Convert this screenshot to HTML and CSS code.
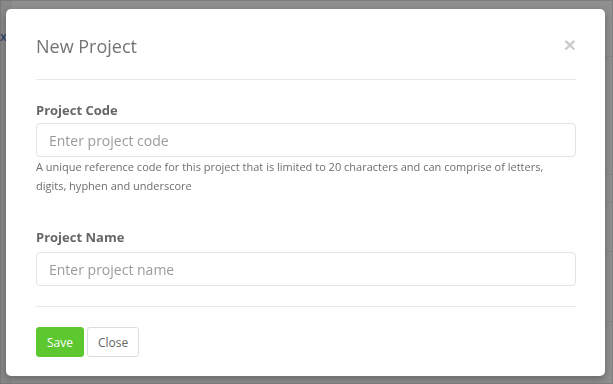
FILE: index.html
```
<!DOCTYPE html>
<html>
<head>
    <meta charset="UTF-8">
    <title>Projects</title>

    <link rel="stylesheet" href="styles.css">

</head>

<body>

<div class="page">
    <div class="page-row page-row-top"><a class="page-link">x</a></div>
    <div class="page-row page-row-1"></div>
    <div class="page-row page-row-2"></div>
    <div class="page-row page-row-3"></div>
    <div class="page-row page-row-4"></div>
    <div class="page-row page-row-5"></div>
</div>

<div class="backdrop">

    <div class="modal">

        <div class="modal-header">
            <h4 class="modal-title">New Project</h4>
            <button type="button" class="modal-close">&times;</button>
        </div>

        <form class="modal-body">
            <div class="form-group">
                <label for="projectCode">Project Code</label>
                <input id="projectCode" type="text" placeholder="Enter project code">
                <p class="help-block">A unique reference code for this project that is limited to 20 characters and can comprise of letters, digits, hyphen and underscore</p>
            </div>

            <div class="form-group form-group-last">
                <label for="projectName">Project Name</label>
                <input id="projectName" type="text" placeholder="Enter project name">
            </div>
        </form>

        <div class="modal-footer">
            <button type="button" class="btn btn-save">Save</button>
            <button type="button" class="btn btn-close">Close</button>
        </div>

    </div>

</div>

</body>
</html>
```

FILE: styles.css
```
html, body {
    margin: 0;
    height: 100%;
}

body {
    font-family: "Open Sans", "Liberation Sans", sans-serif;
    background: #ffffff;
    overflow: hidden;
}

/* page behind the dialog */

.page {
    border-left: 12px solid #f3f3f3;
}

.page-row {
    border-bottom: 1px solid #f0f0f0;
}

.page-row-top {
    height: 56px;
    position: relative;
}

.page-link {
    position: absolute;
    left: -12px;
    top: 27px;
    color: #2a5db0;
    font-size: 13px;
}

.page-row-1 {
    height: 117px;
}

.page-row-2 {
    height: 27px;
}

.page-row-3 {
    height: 48px;
}

.page-row-4 {
    height: 69px;
}

.page-row-5 {
    height: 80px;
}

/* dialog */

.backdrop {
    position: fixed;
    top: 0;
    left: 0;
    right: 0;
    bottom: 0;
    background: rgba(0, 0, 0, 0.44);
    border: 1px solid rgba(0, 0, 0, 0.12);
}

.modal {
    margin: 8px 0 0 5px;
    width: 599px;
    height: 367px;
    box-sizing: border-box;
    padding: 0 29px 0 30px;
    background: #ffffff;
    border-radius: 5px;
    box-shadow: 0 3px 8px rgba(0, 0, 0, 0.3);
}

.modal-header {
    display: flex;
    justify-content: space-between;
    align-items: flex-start;
    padding: 25px 0 21px;
    border-bottom: 1px solid #e9e9e9;
}

.modal-title {
    margin: 0;
    font-size: 18px;
    line-height: 24px;
    font-weight: normal;
    color: #737373;
}

.modal-close {
    margin: 0;
    padding: 0;
    border: 0;
    background: none;
    font-family: "Liberation Sans", sans-serif;
    font-size: 21px;
    line-height: 21px;
    font-weight: bold;
    color: #cccccc;
    cursor: pointer;
}

.modal-body {
    margin: 0;
    padding: 21px 0 20px;
}

.form-group {
    margin-bottom: 33px;
}

.form-group-last {
    margin-bottom: 0;
}

.form-group label {
    display: block;
    font-size: 13px;
    line-height: 18px;
    font-weight: bold;
    color: #666666;
    margin-bottom: 4px;
}

.form-group-last label {
    margin-bottom: 6px;
}

.form-group input {
    display: block;
    width: 100%;
    height: 34px;
    box-sizing: border-box;
    padding: 0 12px;
    border: 1px solid #e3e3e3;
    border-radius: 4px;
    font-family: "Open Sans", "Liberation Sans", sans-serif;
    font-size: 14px;
    color: #555555;
    outline: none;
}

.form-group input::placeholder {
    color: #9b9b9b;
}

.help-block {
    margin: 0;
    font-size: 11px;
    line-height: 19px;
    color: #6e6e6e;
}

.modal-footer {
    display: flex;
    gap: 3px;
    padding: 20px 0;
    border-top: 1px solid #e9e9e9;
}

.btn {
    height: 30px;
    padding: 0 10px;
    border-radius: 3px;
    font-family: "Open Sans", "Liberation Sans", sans-serif;
    font-size: 12px;
    cursor: pointer;
}

.btn-save {
    border: 1px solid #5cc72f;
    background: #5cc72f;
    color: #ffffff;
}

.btn-close {
    border: 1px solid #dddddd;
    background: #ffffff;
    color: #666666;
}
```
